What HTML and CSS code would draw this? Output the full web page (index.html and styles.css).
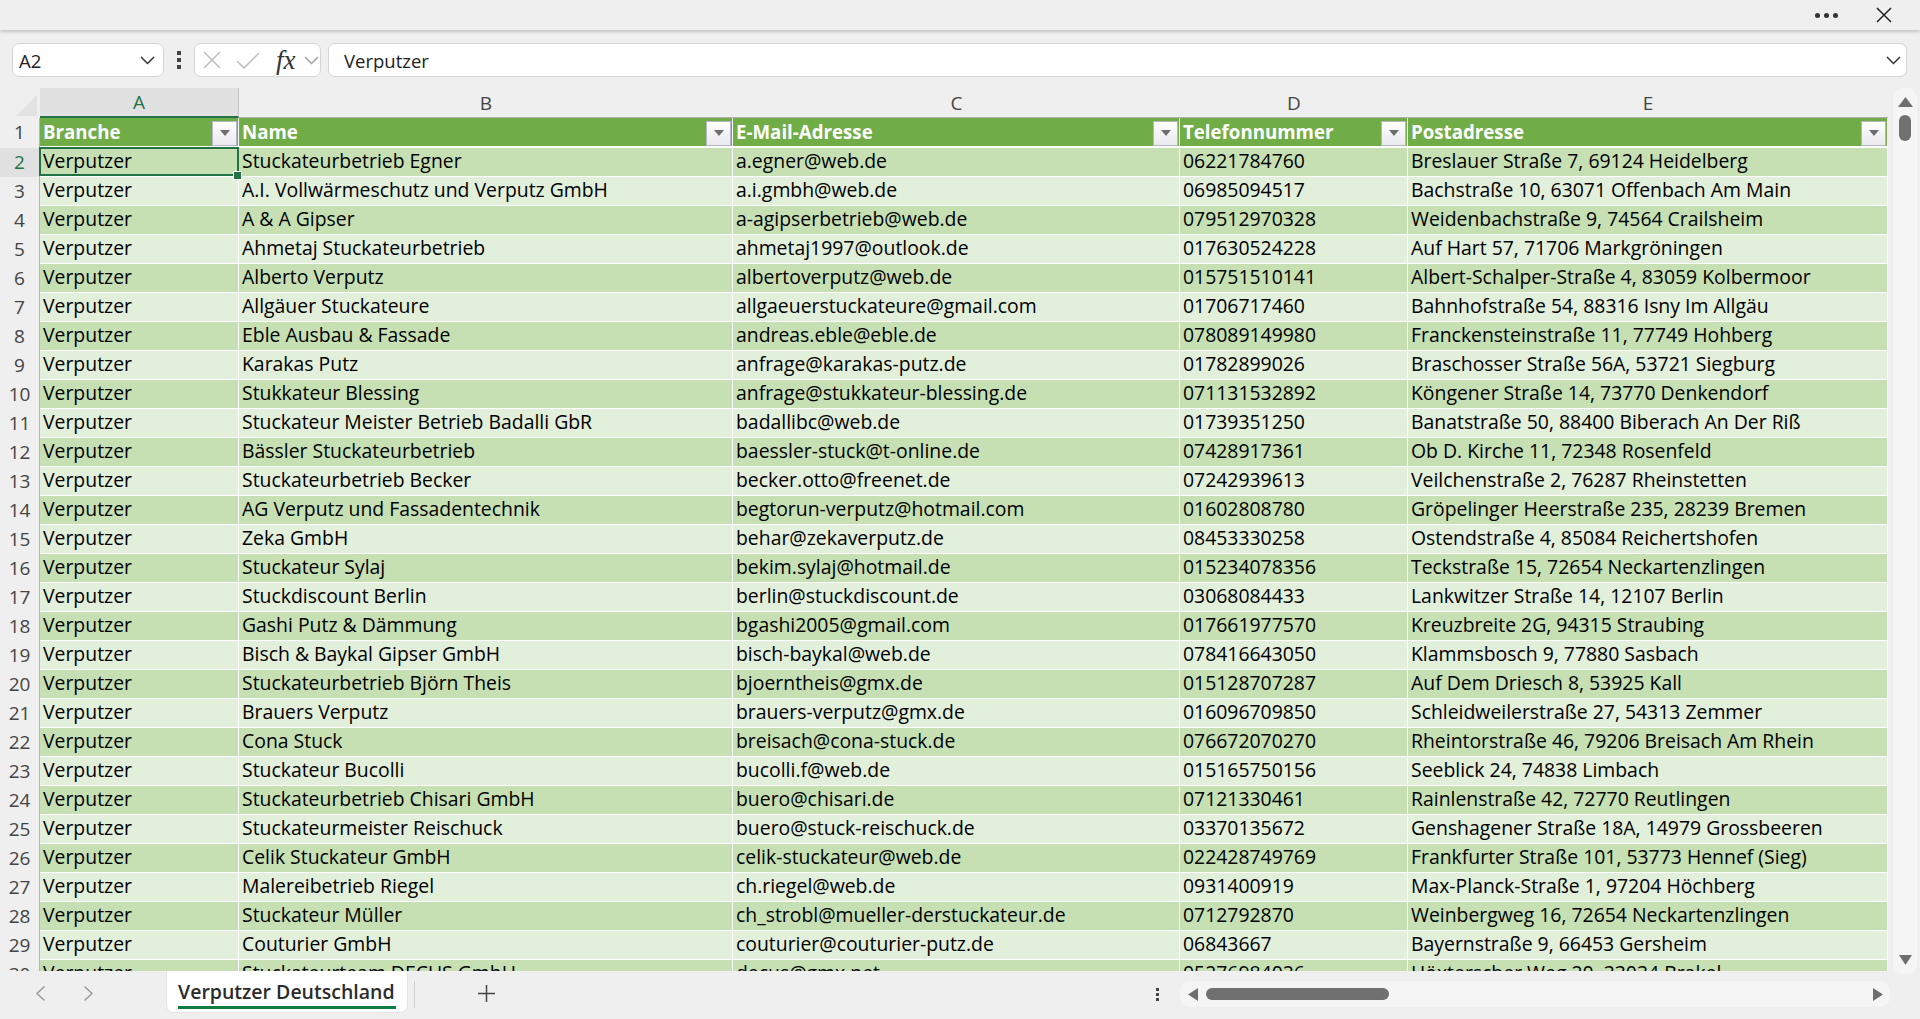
FILE: index.html
```html
<!DOCTYPE html>
<html lang="de">

<head>
    <meta charset="UTF-8">
    <meta name="viewport" content="width=device-width, initial-scale=1.0">
    <title>Verputzer Deutschland</title>
    <link rel="stylesheet" href="styles.css">
</head>

<body>
    <div class="titlebar">
        <div class="more"><i></i><i></i><i></i></div>
        <svg class="close" width="16" height="16" viewBox="0 0 16 16"><path d="M1 1L15 15M15 1L1 15" /></svg>
    </div>

    <div class="formula-bar">
        <div class="name-box">
            <span>A2</span>
            <svg class="chevron" width="15" height="9" viewBox="0 0 15 9"><path d="M1 1L7.5 7.5L14 1" /></svg>
        </div>
        <div class="grip"><i></i><i></i><i></i></div>
        <div class="formula-tools">
            <svg class="tool-x" width="18" height="18" viewBox="0 0 18 18"><path d="M1 1L17 17M17 1L1 17" /></svg>
            <svg class="tool-check" width="24" height="17" viewBox="0 0 24 17"><path d="M1 9L8 16L23 1" /></svg>
            <span class="fx">fx</span>
            <svg class="tool-down" width="15" height="9" viewBox="0 0 15 9"><path d="M1 1L7.5 7.5L14 1" /></svg>
        </div>
        <div class="formula-input">
            <span>Verputzer</span>
            <svg class="chevron" width="15" height="9" viewBox="0 0 15 9"><path d="M1 1L7.5 7.5L14 1" /></svg>
        </div>
    </div>

    <div class="main">
        <div class="sheet">
            <table class="grid">
                <colgroup>
                    <col class="col-num">
                    <col class="col-a">
                    <col class="col-b">
                    <col class="col-c">
                    <col class="col-d">
                    <col class="col-e">
                </colgroup>
                <thead>
                    <tr class="letters">
                        <th class="corner"><svg width="21" height="21" viewBox="0 0 21 21"><path d="M21 0V21H0Z" /></svg></th>
                        <th class="selected">A</th>
                        <th>B</th>
                        <th>C</th>
                        <th>D</th>
                        <th>E</th>
                    </tr>
                    <tr class="table-head">
                        <th class="num">1</th>
                        <th class="under-selected"><div class="head-cell">Branche<button class="filter"></button></div></th>
                        <th><div class="head-cell">Name<button class="filter"></button></div></th>
                        <th><div class="head-cell">E-Mail-Adresse<button class="filter"></button></div></th>
                        <th><div class="head-cell">Telefonnummer<button class="filter"></button></div></th>
                        <th><div class="head-cell">Postadresse<button class="filter"></button></div></th>
                    </tr>
                </thead>
                <tbody>
                    <tr><th class="num selected">2</th><td class="active">Verputzer<span class="selection"></span><span class="handle"></span></td><td>Stuckateurbetrieb Egner</td><td>a.egner@web.de</td><td>06221784760</td><td>Breslauer Straße 7, 69124 Heidelberg</td></tr>
                    <tr><th class="num">3</th><td>Verputzer</td><td>A.I. Vollwärmeschutz und Verputz GmbH</td><td>a.i.gmbh@web.de</td><td>06985094517</td><td>Bachstraße 10, 63071 Offenbach Am Main</td></tr>
                    <tr><th class="num">4</th><td>Verputzer</td><td>A &amp; A Gipser</td><td>a-agipserbetrieb@web.de</td><td>079512970328</td><td>Weidenbachstraße 9, 74564 Crailsheim</td></tr>
                    <tr><th class="num">5</th><td>Verputzer</td><td>Ahmetaj Stuckateurbetrieb</td><td>ahmetaj1997@outlook.de</td><td>017630524228</td><td>Auf Hart 57, 71706 Markgröningen</td></tr>
                    <tr><th class="num">6</th><td>Verputzer</td><td>Alberto Verputz</td><td>albertoverputz@web.de</td><td>015751510141</td><td>Albert-Schalper-Straße 4, 83059 Kolbermoor</td></tr>
                    <tr><th class="num">7</th><td>Verputzer</td><td>Allgäuer Stuckateure</td><td>allgaeuerstuckateure@gmail.com</td><td>01706717460</td><td>Bahnhofstraße 54, 88316 Isny Im Allgäu</td></tr>
                    <tr><th class="num">8</th><td>Verputzer</td><td>Eble Ausbau &amp; Fassade</td><td>andreas.eble@eble.de</td><td>078089149980</td><td>Franckensteinstraße 11, 77749 Hohberg</td></tr>
                    <tr><th class="num">9</th><td>Verputzer</td><td>Karakas Putz</td><td>anfrage@karakas-putz.de</td><td>01782899026</td><td>Braschosser Straße 56A, 53721 Siegburg</td></tr>
                    <tr><th class="num">10</th><td>Verputzer</td><td>Stukkateur Blessing</td><td>anfrage@stukkateur-blessing.de</td><td>071131532892</td><td>Köngener Straße 14, 73770 Denkendorf</td></tr>
                    <tr><th class="num">11</th><td>Verputzer</td><td>Stuckateur Meister Betrieb Badalli GbR</td><td>badallibc@web.de</td><td>01739351250</td><td>Banatstraße 50, 88400 Biberach An Der Riß</td></tr>
                    <tr><th class="num">12</th><td>Verputzer</td><td>Bässler Stuckateurbetrieb</td><td>baessler-stuck@t-online.de</td><td>07428917361</td><td>Ob D. Kirche 11, 72348 Rosenfeld</td></tr>
                    <tr><th class="num">13</th><td>Verputzer</td><td>Stuckateurbetrieb Becker</td><td>becker.otto@freenet.de</td><td>07242939613</td><td>Veilchenstraße 2, 76287 Rheinstetten</td></tr>
                    <tr><th class="num">14</th><td>Verputzer</td><td>AG Verputz und Fassadentechnik</td><td>begtorun-verputz@hotmail.com</td><td>01602808780</td><td>Gröpelinger Heerstraße 235, 28239 Bremen</td></tr>
                    <tr><th class="num">15</th><td>Verputzer</td><td>Zeka GmbH</td><td>behar@zekaverputz.de</td><td>08453330258</td><td>Ostendstraße 4, 85084 Reichertshofen</td></tr>
                    <tr><th class="num">16</th><td>Verputzer</td><td>Stuckateur Sylaj</td><td>bekim.sylaj@hotmail.de</td><td>015234078356</td><td>Teckstraße 15, 72654 Neckartenzlingen</td></tr>
                    <tr><th class="num">17</th><td>Verputzer</td><td>Stuckdiscount Berlin</td><td>berlin@stuckdiscount.de</td><td>03068084433</td><td>Lankwitzer Straße 14, 12107 Berlin</td></tr>
                    <tr><th class="num">18</th><td>Verputzer</td><td>Gashi Putz &amp; Dämmung</td><td>bgashi2005@gmail.com</td><td>017661977570</td><td>Kreuzbreite 2G, 94315 Straubing</td></tr>
                    <tr><th class="num">19</th><td>Verputzer</td><td>Bisch &amp; Baykal Gipser GmbH</td><td>bisch-baykal@web.de</td><td>078416643050</td><td>Klammsbosch 9, 77880 Sasbach</td></tr>
                    <tr><th class="num">20</th><td>Verputzer</td><td>Stuckateurbetrieb Björn Theis</td><td>bjoerntheis@gmx.de</td><td>015128707287</td><td>Auf Dem Driesch 8, 53925 Kall</td></tr>
                    <tr><th class="num">21</th><td>Verputzer</td><td>Brauers Verputz</td><td>brauers-verputz@gmx.de</td><td>016096709850</td><td>Schleidweilerstraße 27, 54313 Zemmer</td></tr>
                    <tr><th class="num">22</th><td>Verputzer</td><td>Cona Stuck</td><td>breisach@cona-stuck.de</td><td>076672070270</td><td>Rheintorstraße 46, 79206 Breisach Am Rhein</td></tr>
                    <tr><th class="num">23</th><td>Verputzer</td><td>Stuckateur Bucolli</td><td>bucolli.f@web.de</td><td>015165750156</td><td>Seeblick 24, 74838 Limbach</td></tr>
                    <tr><th class="num">24</th><td>Verputzer</td><td>Stuckateurbetrieb Chisari GmbH</td><td>buero@chisari.de</td><td>07121330461</td><td>Rainlenstraße 42, 72770 Reutlingen</td></tr>
                    <tr><th class="num">25</th><td>Verputzer</td><td>Stuckateurmeister Reischuck</td><td>buero@stuck-reischuck.de</td><td>03370135672</td><td>Genshagener Straße 18A, 14979 Grossbeeren</td></tr>
                    <tr><th class="num">26</th><td>Verputzer</td><td>Celik Stuckateur GmbH</td><td>celik-stuckateur@web.de</td><td>022428749769</td><td>Frankfurter Straße 101, 53773 Hennef (Sieg)</td></tr>
                    <tr><th class="num">27</th><td>Verputzer</td><td>Malereibetrieb Riegel</td><td>ch.riegel@web.de</td><td>0931400919</td><td>Max-Planck-Straße 1, 97204 Höchberg</td></tr>
                    <tr><th class="num">28</th><td>Verputzer</td><td>Stuckateur Müller</td><td>ch_strobl@mueller-derstuckateur.de</td><td>0712792870</td><td>Weinbergweg 16, 72654 Neckartenzlingen</td></tr>
                    <tr><th class="num">29</th><td>Verputzer</td><td>Couturier GmbH</td><td>couturier@couturier-putz.de</td><td>06843667</td><td>Bayernstraße 9, 66453 Gersheim</td></tr>
                    <tr><th class="num">30</th><td>Verputzer</td><td>Stuckateurteam DECUS GmbH</td><td>decus@gmx.net</td><td>05276984026</td><td>Höxterscher Weg 20, 33034 Brakel</td></tr>
                </tbody>
            </table>
        </div>
        <div class="vscroll">
            <svg width="15" height="10" viewBox="0 0 15 10"><path d="M7.5 0L15 10H0Z" /></svg>
            <div class="vthumb"></div>
            <svg class="vdown" width="13" height="10" viewBox="0 0 13 10"><path d="M0 0H13L6.5 10Z" /></svg>
        </div>
    </div>

    <div class="footer">
        <svg class="nav prev" width="11" height="17" viewBox="0 0 11 17"><path d="M9.5 1.5L2 8.5L9.5 15.5" /></svg>
        <svg class="nav next" width="11" height="17" viewBox="0 0 11 17"><path d="M1.5 1.5L9 8.5L1.5 15.5" /></svg>
        <div class="tab"><span>Verputzer Deutschland</span></div>
        <div class="tab-sep"></div>
        <svg class="plus" width="17" height="17" viewBox="0 0 17 17"><path d="M8.5 0V17M0 8.5H17" /></svg>
        <div class="grip foot-grip"><i></i><i></i><i></i></div>
        <div class="hscroll">
            <svg width="10" height="13" viewBox="0 0 10 13"><path d="M10 0V13L0 6.5Z" /></svg>
            <div class="hthumb"></div>
            <svg class="hright" width="10" height="13" viewBox="0 0 10 13"><path d="M0 0V13L10 6.5Z" /></svg>
        </div>
    </div>
</body>

</html>
```

FILE: styles.css
```css
* {
    box-sizing: border-box;
}

html,
body {
    margin: 0;
    height: 100%;
}

body {
    height: 100vh;
    display: flex;
    flex-direction: column;
    overflow: hidden;
    background: #efefef;
    color: #000;
    font-family: "Open Sans", "Noto Sans", sans-serif;
}

/* top strip */
.titlebar {
    height: 30px;
    flex: none;
    display: flex;
    align-items: center;
    justify-content: flex-end;
    padding-right: 28px;
    box-shadow: 0 2px 3px rgba(0, 0, 0, 0.18);
}

.more {
    display: flex;
    gap: 4px;
    margin-right: 38px;
}

.more i {
    width: 5px;
    height: 5px;
    border-radius: 50%;
    background: #333;
}

.close path {
    fill: none;
    stroke: #222;
    stroke-width: 1.5;
}

/* formula bar */
.formula-bar {
    height: 34px;
    flex: none;
    margin: 13px 13px 0 12px;
    display: flex;
    align-items: center;
}

.name-box,
.formula-tools,
.formula-input {
    height: 100%;
    display: flex;
    align-items: center;
    background: #fff;
    border: 1px solid #d4d4d4;
    border-radius: 7px;
    font-size: 18.5px;
    color: #222;
}

.name-box {
    width: 152px;
    padding: 0 8px 0 6px;
    justify-content: space-between;
}

.chevron path,
.tool-down path {
    fill: none;
    stroke: #333;
    stroke-width: 1.5;
}

.grip {
    display: flex;
    flex-direction: column;
    gap: 3px;
    margin: 0 13px;
}

.grip i {
    width: 4px;
    height: 4px;
    background: #444;
}

.formula-tools {
    width: 127px;
    padding-left: 8px;
}

.tool-x path,
.tool-check path {
    fill: none;
    stroke: #bdbdbd;
    stroke-width: 1.5;
}

.tool-check {
    margin-left: 15px;
}

.tool-down {
    margin-left: 7px;
}

.tool-down path {
    stroke: #a0a0a0;
}

.fx {
    margin-left: 16px;
    width: 21px;
    font-family: "Liberation Serif", serif;
    font-style: italic;
    font-size: 27px;
    line-height: 26px;
    color: #333;
}

.formula-input {
    flex: 1;
    margin-left: 7px;
    padding: 0 5px 0 15px;
    justify-content: space-between;
}

/* sheet */
.main {
    flex: 1;
    min-height: 0;
    margin-top: 11px;
    display: flex;
}

.sheet {
    width: 1888px;
    overflow: hidden;
}

.grid {
    width: 1888px;
    table-layout: fixed;
    border-collapse: separate;
    border-spacing: 0;
    font-size: 19.4px;
}

.col-num {
    width: 40px;
}

.col-a {
    width: 199px;
}

.col-b {
    width: 494px;
}

.col-c {
    width: 447px;
}

.col-d {
    width: 228px;
}

.col-e {
    width: 480px;
}

.grid th,
.grid td {
    padding: 0;
    font-weight: normal;
    white-space: nowrap;
    overflow: hidden;
}

.grid .letters th {
    height: 28px;
    text-align: center;
    color: #444;
    font-size: 19px;
    line-height: 28px;
    border-bottom: 1px solid #b2b2b2;
}

.grid .letters .selected {
    background: #e1e1e1;
    color: #217346;
    border-right: 1px solid #c4c4c4;
    border-bottom: 2px solid #217346;
}

.grid .letters .corner {
    border-bottom: 0;
    text-align: right;
    padding: 5px 3px 0 0;
    line-height: 0;
}

.corner path {
    fill: #e2e2e2;
}

.grid .num {
    padding-bottom: 2px;
    text-align: center;
    color: #444;
    font-size: 19px;
    border-right: 1px solid #b2b2b2;
    line-height: 26px;
}

.grid .num.selected {
    background: #e1e1e1;
    color: #217346;
}

.table-head th {
    height: 30px;
}

.table-head th:not(.num) {
    background: #70ad47;
    border-bottom: 2px solid #fff;
    border-right: 1px solid #fff;
    color: #fff;
    font-size: 18.7px;
    font-weight: bold;
    text-align: left;
}

.head-cell {
    height: 28px;
    display: flex;
    align-items: center;
    justify-content: space-between;
    padding: 0 0 2px 3px;
}

.filter {
    width: 25px;
    height: 25px;
    margin: 4px 1px 0 0;
    padding: 0;
    appearance: none;
    display: flex;
    align-items: center;
    justify-content: center;
    border: 1px solid #b5b8c4;
    background: linear-gradient(#fff, #e9e9ef);
}

.filter::after {
    content: "";
    border-left: 5px solid transparent;
    border-right: 5px solid transparent;
    border-top: 6px solid #6e6e6e;
}

.grid tbody td {
    height: 29px;
    padding: 0 0 2px 3px;
    line-height: 26px;
    border-right: 1px solid #fff;
    border-bottom: 1px solid #fff;
}

tbody tr:nth-child(odd) td {
    background: #c6e0b4;
}

tbody tr:nth-child(even) td {
    background: #e2efda;
}

tbody .num {
    height: 29px;
}

.grid td.active {
    position: relative;
    overflow: visible;
}

.selection {
    position: absolute;
    left: -1px;
    top: -1px;
    right: -1px;
    bottom: 0;
    border: 2px solid #217346;
}

.handle {
    position: absolute;
    right: -3px;
    bottom: -3px;
    width: 7px;
    height: 7px;
    background: #217346;
    outline: 1px solid #fff;
}

/* vertical scrollbar, runs a little past the bottom of the sheet */
.vscroll {
    width: 24px;
    height: 886px;
    margin-left: 5px;
    padding-top: 9px;
    display: flex;
    flex-direction: column;
    align-items: center;
    background: #f5f5f5;
    border-radius: 10px;
}

.vscroll path,
.hscroll path {
    fill: #6e6e6e;
}

.vthumb {
    width: 12px;
    height: 26px;
    margin-top: 8px;
    background: #707070;
    border-radius: 6px;
}

.vdown {
    margin-top: auto;
    margin-bottom: 9px;
}

/* bottom strip */
.footer {
    height: 48px;
    flex: none;
    display: flex;
    align-items: flex-start;
}

.nav {
    margin-top: 14px;
}

.nav path {
    fill: none;
    stroke: #9a9a9a;
    stroke-width: 1.5;
}

.prev {
    margin-left: 35px;
}

.next {
    margin-left: 37px;
}

.tab {
    width: 242px;
    height: 42px;
    margin-left: 72px;
    padding: 6px 11px 0;
    background: #fff;
    border: 1px solid #e4e4e4;
    border-top: 0;
    border-radius: 0 0 8px 8px;
    font-size: 19.5px;
    font-weight: 600;
    color: #2b2b2b;
}

.tab span {
    display: block;
    height: 32px;
    white-space: nowrap;
    border-bottom: 3px solid #107c41;
    line-height: 29px;
}

.tab-sep {
    width: 1px;
    height: 27px;
    margin: 10px 0 0 6px;
    background: #cfcfcf;
}

.plus {
    margin: 14px 0 0 63px;
}

.plus path {
    fill: none;
    stroke: #444;
    stroke-width: 1.5;
}

.foot-grip {
    margin: 17px 0 0 661px;
    gap: 2px;
}

.foot-grip i {
    width: 3px;
    height: 3px;
}

.hscroll {
    width: 710px;
    height: 26px;
    margin: 10px 0 0 21px;
    padding: 0 7px 0 8px;
    display: flex;
    align-items: center;
    background: #f5f5f5;
    border-radius: 10px;
}

.hthumb {
    width: 183px;
    height: 12px;
    margin-left: 8px;
    background: #707070;
    border-radius: 6px;
}

.hright {
    margin-left: auto;
}
```
